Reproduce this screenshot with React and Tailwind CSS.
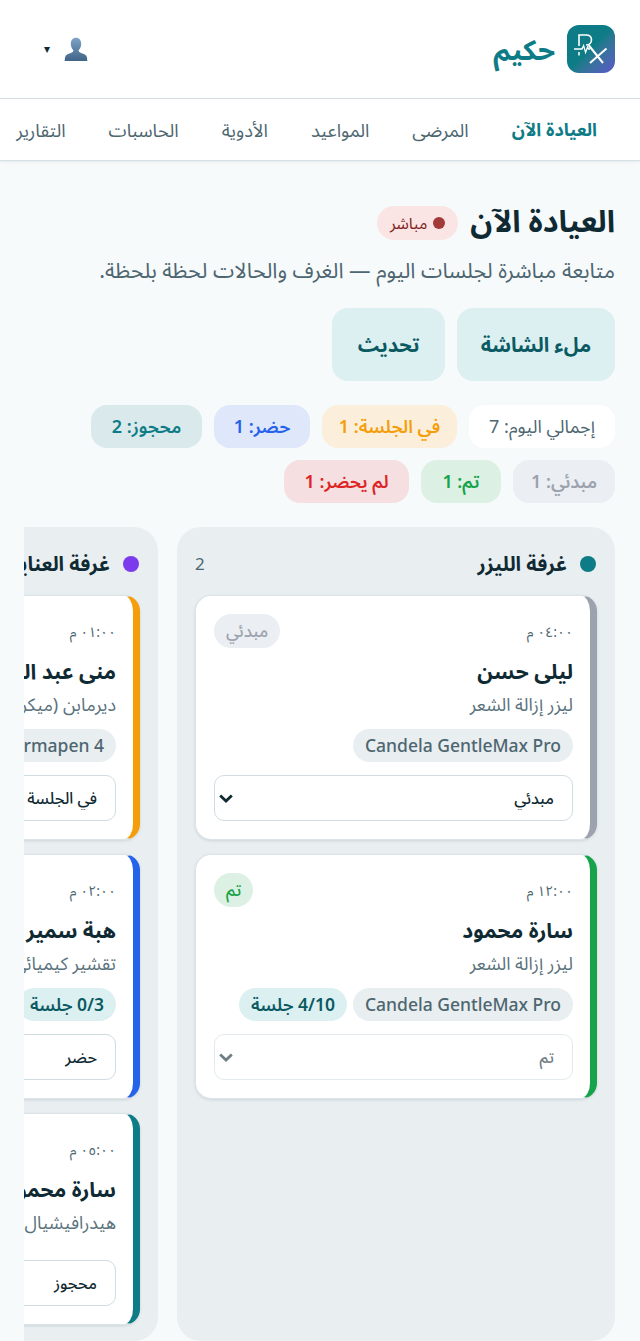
import React from "react";

const NAV = ["العيادة الآن", "المرضى", "المواعيد", "الأدوية", "الحاسبات", "التقارير"];

const Logo = () => (
  <div className="h-12 w-12 shrink-0 rounded-xl bg-gradient-to-br from-[#0e7c86] from-50% to-[#5b55c9]">
    <svg viewBox="0 0 48 48" className="h-12 w-12" fill="none" stroke="#fff" strokeWidth="1.6">
      <path d="M12 21V10h7c3.5 0 5.5 2 5.5 4.8S22.500 20 19 20" />
      <path d="M7 24h8l1.600-3.500 2 7 2-5.500 1 2h1.500" strokeWidth="1.300" />
      <path d="M12 27v3.500" strokeWidth="1.500" />
      <path d="M21.500 20 36 38M39.500 23.500 23 38" strokeWidth="2" />
    </svg>
  </div>
);

const UserIcon = () => (
  <svg viewBox="0 0 24 24" className="h-[26px] w-[26px]">
    <defs>
      <linearGradient id="bust" x1="0" y1="0" x2="0" y2="1">
        <stop offset="0" stopColor="#7ea3c6" />
        <stop offset="1" stopColor="#3f6488" />
      </linearGradient>
    </defs>
    <path
      fill="url(#bust)"
      d="M12 1.5c3 0 4.8 2.4 4.8 5.6 0 2.5-1 4.7-2.4 6 .1 1.4.8 2 2.4 2.7 2.6 1 4.6 1.6 5.2 3.6.3 1 .4 2.2.4 3.6H1.6c0-1.4.1-2.6.4-3.6.6-2 2.6-2.6 5.2-3.6 1.6-.7 2.3-1.3 2.4-2.7-1.4-1.3-2.4-3.5-2.4-6 0-3.2 1.8-5.6 4.8-5.6z"
    />
  </svg>
);

const Pill = ({ className, children }) => (
  <span className={`flex h-[43px] items-center justify-center rounded-2xl text-[18px] ${className}`}>{children}</span>
);

const SessionCard = ({ time, name, service, tags, status, accent, badge }) => (
  <div className={`rounded-2xl border border-[#dbe4e8] border-r-[7px] bg-white py-[18px] pl-[18px] pr-[17px] shadow-[0_1px_3px_rgba(15,42,51,0.12)] ${accent}`}>
    <div className="flex h-[34px] items-center justify-between">
      <span className="text-[14px] tracking-[-1px] text-[#4d6670]">{time}</span>
      {badge && <span className={`flex h-[34px] items-center rounded-full px-3 text-[17px] font-medium ${badge.className}`}>{badge.label}</span>}
    </div>
    <div className="mt-[7px] text-[21px] font-bold leading-8 text-[#0f2a33]">{name}</div>
    <div className="mt-[3px] text-[18px] leading-7 text-[#5a727c]">{service}</div>
    {tags && (
      <div className="mt-[11px] flex gap-1.5">
        {tags.map((t) => (
          <span
            key={t.label}
            className={`flex h-[33px] shrink-0 items-center whitespace-nowrap rounded-full px-3 text-[17.5px] font-medium ${t.session ? "bg-[#dcf0f2] font-semibold text-[#0b5a62]" : "bg-[#e9eef1] text-[#4d6670]"}`}
          >
            {t.label}
          </span>
        ))}
      </div>
    )}
    <div className={`relative ${tags ? "mt-[13px]" : "mt-6"} ${status === "تم" ? "opacity-60" : ""}`}>
      <select
        defaultValue={status}
        disabled={status === "تم"}
        className="block h-[46px] w-full appearance-none rounded-[10px] border border-[#cfdde3] bg-white px-[18px] text-[16px] font-medium text-[#0f2a33]"
      >
        <option>{status}</option>
      </select>
      <svg viewBox="0 0 14 9" className="absolute left-[5px] top-[19px] h-[9px] w-[14px]" fill="none" stroke="#0f2a33" strokeWidth="2.8">
        <path d="M1.2 1.5 7 7l5.8-5.5" />
      </svg>
    </div>
  </div>
);

const Column = ({ title, dot, count, children }) => (
  <div className="flex w-[438px] shrink-0 flex-col rounded-3xl bg-[#e9eef1] px-[18px] pt-[18px] pb-4">
    <div className="mb-[13px] flex h-[37px] items-center justify-between pr-px">
      <div className="flex items-center gap-[13px]">
        <span className={`h-4 w-4 rounded-full ${dot}`} />
        <span className="whitespace-nowrap text-[20px] font-bold text-[#0f2a33]">{title}</span>
      </div>
      <span className="text-[17px] text-[#4d6670]">{count}</span>
    </div>
    <div className="flex flex-col gap-[14px]">{children}</div>
  </div>
);

export default function App() {
  return (
    <div dir="rtl" className="h-[1341px] overflow-hidden bg-[#f7fafb] font-['Noto_Sans','Noto_Sans_Arabic','DejaVu_Sans',sans-serif]">
      <header className="flex h-[99px] items-center justify-between border-b border-[#d5e0e5] bg-white pl-6 pr-[25px]">
        <div className="flex items-center gap-3">
          <Logo />
          <span className="text-[28px] font-bold text-[#0e7c86]">حكيم</span>
        </div>
        <div className="flex items-center gap-[13px] pl-5">
          <UserIcon />
          <span className="text-[12px] text-[#0f2a33]">▾</span>
        </div>
      </header>

      <nav className="flex h-[62px] items-center gap-[43px] whitespace-nowrap border-b border-[#d5e0e5] bg-white pr-[43px] shadow-[0_1px_3px_rgba(15,42,51,0.08)]">
        {NAV.map((item, i) => (
          <span key={item} className={i === 0 ? "text-[18px] font-bold text-[#0e7c86]" : "text-[18.3px] text-[#4d6670]"}>
            {item}
          </span>
        ))}
      </nav>

      <main className="pl-6 pr-[25px] pt-10">
        <div className="flex h-10 items-center gap-3">
          <h1 className="text-[30.5px] font-bold text-[#0f2a33]">العيادة الآن</h1>
          <span className="mt-1 flex h-[34px] items-center gap-[6px] rounded-full bg-[#fbe4e4] px-[13px] text-[16px] text-[#7f1d1d]">
            <span className="h-3 w-3 rounded-full bg-[#a33a3a]" />
            مباشر
          </span>
        </div>
        <p className="mt-[13px] whitespace-nowrap text-[21.5px] leading-8 text-[#4d6670]">
          متابعة مباشرة لجلسات اليوم — الغرف والحالات لحظة بلحظة.
        </p>

        <div className="mt-[22px] flex gap-3">
          <button className="h-[73px] w-[158px] rounded-2xl bg-[#dcf0f2] text-[20px] font-bold text-[#0b5a62]">ملء الشاشة</button>
          <button className="h-[73px] w-[113px] rounded-2xl bg-[#dcf0f2] text-[20px] font-bold text-[#0b5a62]">تحديث</button>
        </div>

        <div className="mt-6 flex flex-wrap gap-3">
          <Pill className="w-[146px] bg-white text-[#4d6670]">إجمالي اليوم: 7</Pill>
          <Pill className="w-[135px] bg-[#fbefdc] font-semibold text-[#f59e0b]">في الجلسة: 1</Pill>
          <Pill className="w-[96px] bg-[#dfe7fa] font-semibold text-[#2563eb]">حضر: 1</Pill>
          <Pill className="w-[111px] bg-[#d9e9ec] font-semibold text-[#0e7c86]">محجوز: 2</Pill>
          <Pill className="w-[102px] bg-[#ebeef2] font-semibold text-[#9ca3af]">مبدئي: 1</Pill>
          <Pill className="w-[80px] bg-[#dcf1e4] font-semibold text-[#16a34a]">تم: 1</Pill>
          <Pill className="w-[125px] bg-[#f5dfe1] font-semibold text-[#dc2626]">لم يحضر: 1</Pill>
        </div>

        <div className="mt-6 flex gap-[19px] overflow-hidden">
          <Column title="غرفة الليزر" dot="bg-[#0e7c86]" count="2">
            <SessionCard
              time="٠٤:٠٠ م"
              name="ليلى حسن"
              service="ليزر إزالة الشعر"
              tags={[{ label: "Candela GentleMax Pro" }]}
              status="مبدئي"
              accent="border-r-[#9ca3af]"
              badge={{ label: "مبدئي", className: "bg-[#ebeef2] text-[#9ca3af]" }}
            />
            <SessionCard
              time="١٢:٠٠ م"
              name="سارة محمود"
              service="ليزر إزالة الشعر"
              tags={[{ label: "Candela GentleMax Pro" }, { label: "4/10 جلسة", session: true }]}
              status="تم"
              accent="border-r-[#16a34a]"
              badge={{ label: "تم", className: "bg-[#dcf1e4] text-[#16a34a]" }}
            />
          </Column>
          <Column title="غرفة العناية بالبشرة" dot="bg-[#7c3aed]" count="3">
            <SessionCard
              time="٠١:٠٠ م"
              name="منى عبد الله"
              service="ديرمابن (ميكرونيدلينج)"
              tags={[{ label: "Dermapen 4" }]}
              status="في الجلسة"
              accent="border-r-[#f59e0b]"
            />
            <SessionCard
              time="٠٢:٠٠ م"
              name="هبة سمير"
              service="تقشير كيميائي"
              tags={[{ label: "0/3 جلسة", session: true }]}
              status="حضر"
              accent="border-r-[#2563eb]"
            />
            <SessionCard
              time="٠٥:٠٠ م"
              name="سارة محمود"
              service="هيدرافيشيال"
              status="محجوز"
              accent="border-r-[#0e7c86]"
            />
          </Column>
        </div>
      </main>
    </div>
  );
}
